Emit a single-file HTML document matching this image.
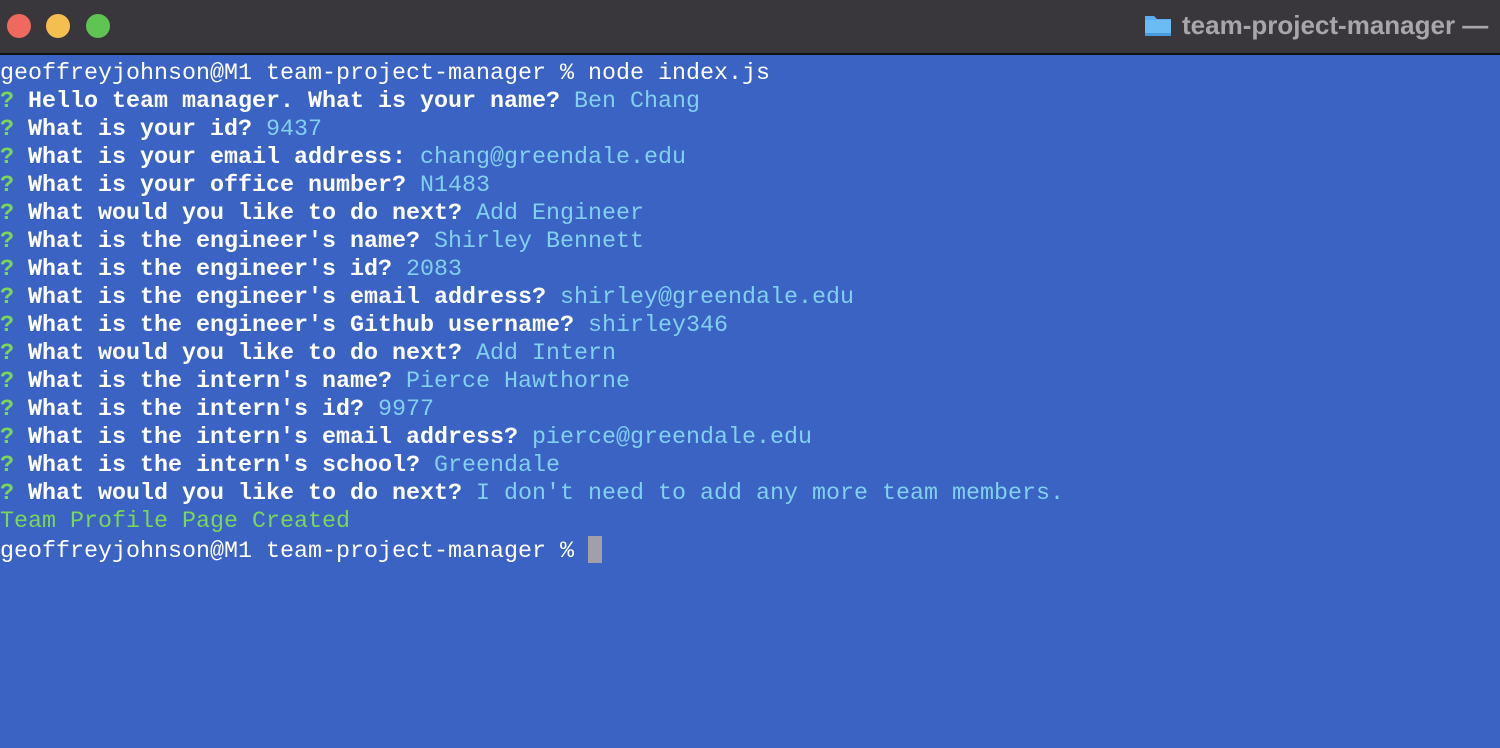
<!DOCTYPE html>
<html><head><style>
body{margin:0;width:1500px;height:748px;overflow:hidden;background:#3b63c4;}
.bar{position:absolute;left:0;top:0;width:1500px;height:53px;background:#3a373c;border-bottom:2px solid #111;}
.d{position:absolute;top:14px;width:24px;height:24px;border-radius:50%;}
.title{position:absolute;left:1182px;top:10px;font:bold 26px "Liberation Sans",sans-serif;color:#a9a6ab;white-space:nowrap;}
.folder{position:absolute;left:1144px;top:13px;width:28px;height:24px;}
pre{position:absolute;left:0;top:60px;margin:0;font:23.33px/28px "Liberation Mono",monospace;color:#fff;}
b{font-weight:bold;}
.g{color:#7ad65a;font-weight:bold}.a{color:#80d0ee}.t{color:#7ad65a}
.cur{display:inline-block;width:14px;height:27px;background:#a0a0a6;vertical-align:-6px;}
</style></head><body>
<div class="bar">
<div class="d" style="left:7px;background:#ee6a5e"></div>
<div class="d" style="left:46px;background:#f5bf4f"></div>
<div class="d" style="left:86px;background:#5fc454"></div>
<svg class="folder" viewBox="0 0 28 24"><path d="M1 3h9l3 3h14v16H1z" fill="#5aaef0"/><rect x="1" y="7" width="26" height="16" rx="1" fill="#6cbcf4"/><rect x="1" y="20" width="26" height="3" fill="#4a9ae0"/></svg>
<div class="title">team-project-manager —</div>
</div>
<pre>geoffreyjohnson@M1 team-project-manager % node index.js
<span class="g">?</span> <b>Hello team manager. What is your name?</b> <span class="a">Ben Chang</span>
<span class="g">?</span> <b>What is your id?</b> <span class="a">9437</span>
<span class="g">?</span> <b>What is your email address:</b> <span class="a">chang@greendale.edu</span>
<span class="g">?</span> <b>What is your office number?</b> <span class="a">N1483</span>
<span class="g">?</span> <b>What would you like to do next?</b> <span class="a">Add Engineer</span>
<span class="g">?</span> <b>What is the engineer's name?</b> <span class="a">Shirley Bennett</span>
<span class="g">?</span> <b>What is the engineer's id?</b> <span class="a">2083</span>
<span class="g">?</span> <b>What is the engineer's email address?</b> <span class="a">shirley@greendale.edu</span>
<span class="g">?</span> <b>What is the engineer's Github username?</b> <span class="a">shirley346</span>
<span class="g">?</span> <b>What would you like to do next?</b> <span class="a">Add Intern</span>
<span class="g">?</span> <b>What is the intern's name?</b> <span class="a">Pierce Hawthorne</span>
<span class="g">?</span> <b>What is the intern's id?</b> <span class="a">9977</span>
<span class="g">?</span> <b>What is the intern's email address?</b> <span class="a">pierce@greendale.edu</span>
<span class="g">?</span> <b>What is the intern's school?</b> <span class="a">Greendale</span>
<span class="g">?</span> <b>What would you like to do next?</b> <span class="a">I don't need to add any more team members.</span>
<span class="t">Team Profile Page Created</span>
geoffreyjohnson@M1 team-project-manager % <span class="cur"></span></pre>
</body></html>
